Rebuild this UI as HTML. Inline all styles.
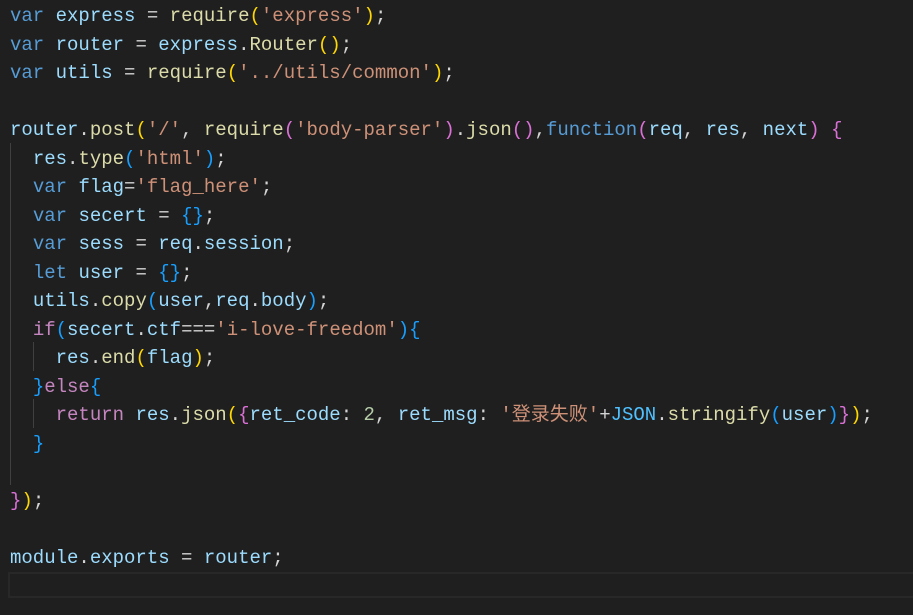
<!DOCTYPE html>
<html><head><meta charset="utf-8"><style>
html,body{margin:0;padding:0;background:#1f1f1f;width:913px;height:615px;overflow:hidden}
pre{margin:0;position:absolute;left:10px;top:2px;font-family:"Liberation Mono","Noto Sans CJK SC",monospace;font-size:19px;line-height:28.5px;color:#d4d4d4}
.k{color:#569cd6}.v{color:#9cdcfe}.f{color:#dcdcaa}.s{color:#ce9178}.c{color:#c586c0}.n{color:#b5cea8}
.g{color:#ffd700}.p{color:#da70d6}.b{color:#179fff}.j{color:#4fc1ff}
.guide{position:absolute;width:1px;background:#404040}
.cur{position:absolute;left:8px;top:572px;width:905px;height:26px;border:2px solid #282828;border-right:none;box-sizing:border-box}
</style></head><body>
<div class="guide" style="left:10px;top:143px;height:342px"></div>
<div class="guide" style="left:33px;top:342px;height:29px"></div>
<div class="guide" style="left:33px;top:399px;height:29px"></div>
<div class="cur"></div>
<pre><span class="k">var</span> <span class="v">express</span> = <span class="f">require</span><span class="g">(</span><span class="s">'express'</span><span class="g">)</span>;
<span class="k">var</span> <span class="v">router</span> = <span class="v">express</span>.<span class="f">Router</span><span class="g">()</span>;
<span class="k">var</span> <span class="v">utils</span> = <span class="f">require</span><span class="g">(</span><span class="s">'../utils/common'</span><span class="g">)</span>;

<span class="v">router</span>.<span class="f">post</span><span class="g">(</span><span class="s">'/'</span>, <span class="f">require</span><span class="p">(</span><span class="s">'body-parser'</span><span class="p">)</span>.<span class="f">json</span><span class="p">()</span>,<span class="k">function</span><span class="p">(</span><span class="v">req</span>, <span class="v">res</span>, <span class="v">next</span><span class="p">)</span> <span class="p">{</span>
  <span class="v">res</span>.<span class="f">type</span><span class="b">(</span><span class="s">'html'</span><span class="b">)</span>;
  <span class="k">var</span> <span class="v">flag</span>=<span class="s">'flag_here'</span>;
  <span class="k">var</span> <span class="v">secert</span> = <span class="b">{}</span>;
  <span class="k">var</span> <span class="v">sess</span> = <span class="v">req</span>.<span class="v">session</span>;
  <span class="k">let</span> <span class="v">user</span> = <span class="b">{}</span>;
  <span class="v">utils</span>.<span class="f">copy</span><span class="b">(</span><span class="v">user</span>,<span class="v">req</span>.<span class="v">body</span><span class="b">)</span>;
  <span class="c">if</span><span class="b">(</span><span class="v">secert</span>.<span class="v">ctf</span>===<span class="s">'i-love-freedom'</span><span class="b">){</span>
    <span class="v">res</span>.<span class="f">end</span><span class="g">(</span><span class="v">flag</span><span class="g">)</span>;
  <span class="b">}</span><span class="c">else</span><span class="b">{</span>
    <span class="c">return</span> <span class="v">res</span>.<span class="f">json</span><span class="g">(</span><span class="p">{</span><span class="v">ret_code</span>: <span class="n">2</span>, <span class="v">ret_msg</span>: <span class="s">'登录失败'</span>+<span class="j">JSON</span>.<span class="f">stringify</span><span class="b">(</span><span class="v">user</span><span class="b">)</span><span class="p">}</span><span class="g">)</span>;
  <span class="b">}</span>

<span class="p">}</span><span class="g">)</span>;

<span class="v">module</span>.<span class="v">exports</span> = <span class="v">router</span>;
</pre>
</body></html>
